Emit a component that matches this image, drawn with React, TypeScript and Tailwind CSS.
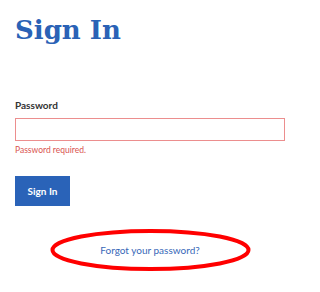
export default function App() {
  return (
    <div className="w-[300px] h-[292px] bg-white px-[15px] pt-[14px] font-['Lato',sans-serif] overflow-hidden">
      {/* Title */}
      <h1 className="font-['DejaVu_Serif',serif] font-bold text-[26px] leading-[32px] text-[#2a62b6]">
        Sign In
      </h1>

      {/* Form */}
      <form className="mt-[53px] flex flex-col" onSubmit={(e) => e.preventDefault()}>
        <label className="text-[10px] leading-[13px] font-bold text-[#333]">Password</label>
        <input
          type="password"
          className="mt-[6px] h-[23px] w-full border border-[#ec8e8e] bg-white outline-none"
        />
        <p className="mt-[4px] text-[8.5px] leading-[11px] text-[#d9534f]">Password required.</p>

        <div className="mt-[20px]">
          <button
            type="submit"
            className="w-[55px] h-[30px] bg-[#2a63b8] text-white text-[10px] font-bold"
          >
            Sign In
          </button>
        </div>
      </form>

      {/* Forgot link */}
      <div className="mt-[23px] flex justify-center">
        <div className="relative w-[201px] h-[42px] flex items-center justify-center">
          <a href="#" className="text-[10px] text-[#3868b8]">
            Forgot your password?
          </a>
          <svg className="absolute inset-0" width="201" height="42" viewBox="0 0 201 42">
            <ellipse cx="100.5" cy="21" rx="98" ry="19" fill="none" stroke="#ff0000" strokeWidth="4" />
          </svg>
        </div>
      </div>
    </div>
  );
}
